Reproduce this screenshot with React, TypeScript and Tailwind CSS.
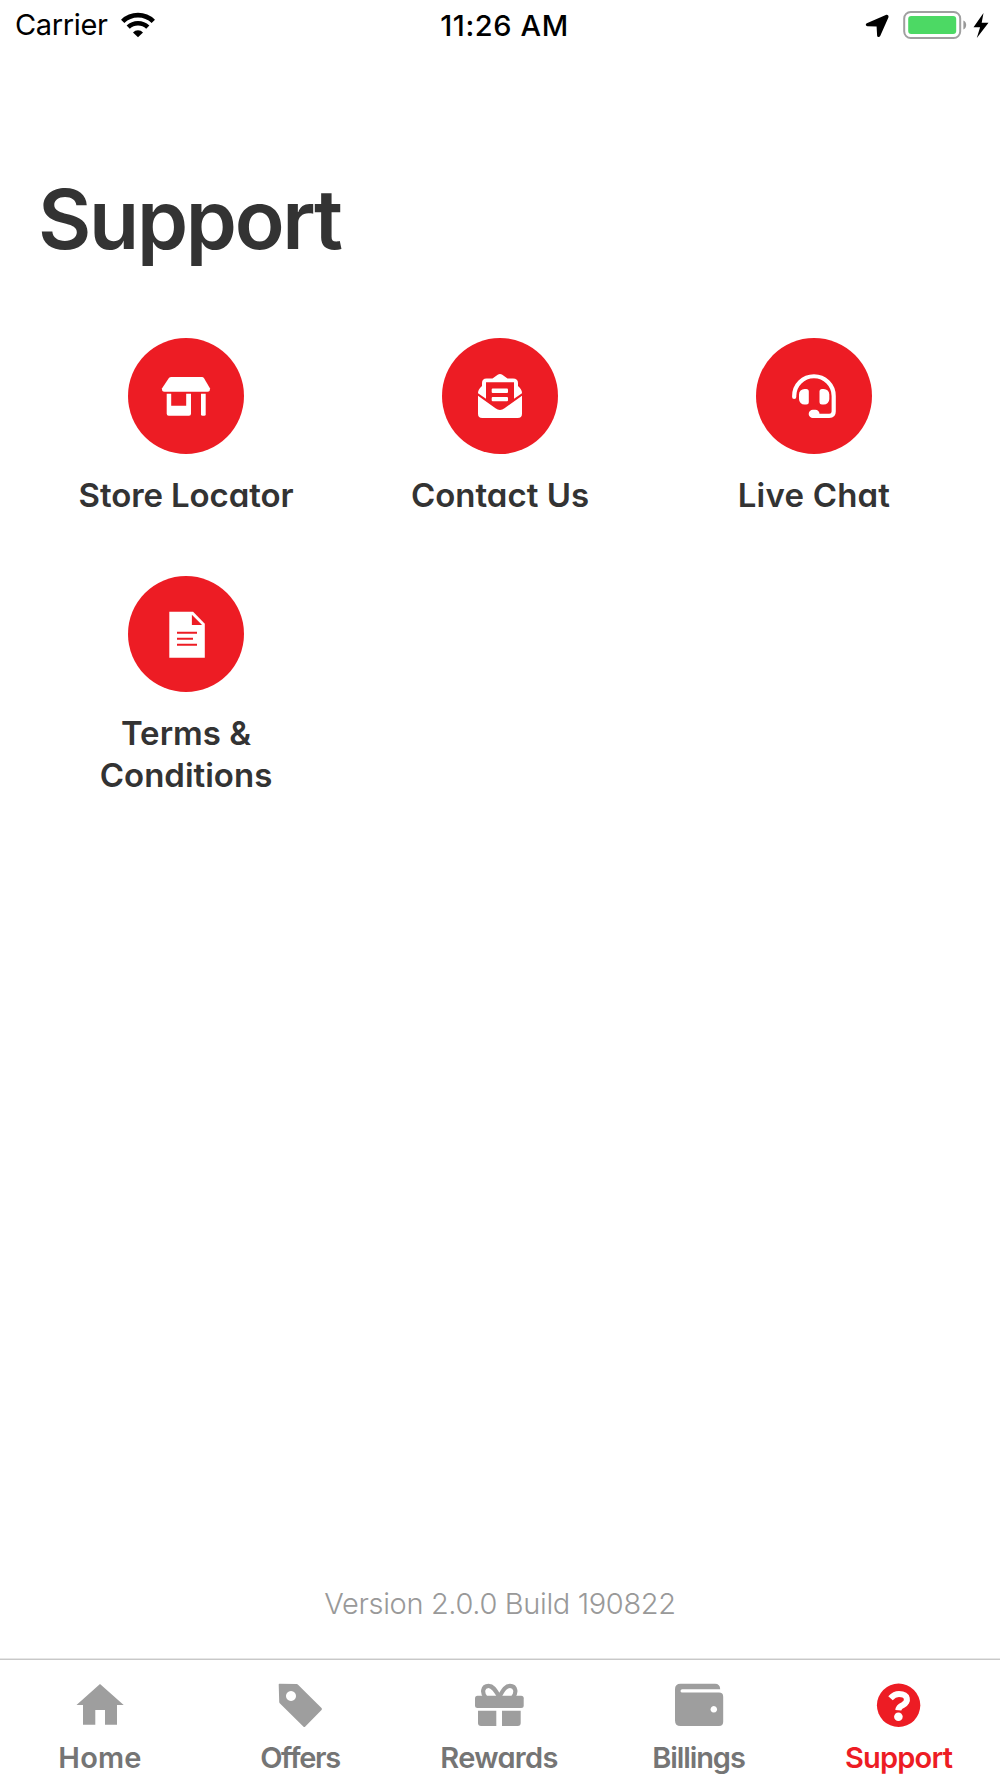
import * as React from "react";

function StatusBar() {
  return (
    <div className="grid h-[50px] grid-cols-3 items-center pl-[15px] pr-[11px] text-[29px] text-black">
      <div className="flex items-center gap-[13px]">
        <span className="tracking-[-0.35px]">Carrier</span>
        <svg className="h-[26px] w-[34px]" viewBox="0 0 34 26" fill="none" stroke="#000">
          <path d="M1.7 9.4a22 22 0 0 1 30.6 0" strokeWidth="4.8" />
          <path d="M7.2 15.2a14.2 14.2 0 0 1 19.6 0" strokeWidth="4.6" />
          <path d="M17 25.3l-5-4.9a7 7 0 0 1 10 0z" fill="#000" stroke="none" />
        </svg>
      </div>
      <div className="pt-px pl-[5px] text-center font-medium tracking-[0.6px]">11:26 AM</div>
      <div className="flex items-center justify-end">
        <svg className="h-[30px] w-[124px]" viewBox="865 9 124 30">
          <path
            d="M885.8 14L866.800 22.200c-1.600.9-1.200 2.900.6 3l9.200.4.500 8.800c.2 2.100 2.300 2.200 3.100.6L888.400 16.600c.7-1.700-.8-3.300-2.600-2.600z"
            fill="#000"
          />
          <rect x="904.200" y="11" width="56" height="26" rx="6.500" fill="none" stroke="#a0a0a0" strokeWidth="2" />
          <rect x="908.200" y="15" width="48" height="18" rx="3" fill="#4cd964" />
          <path d="M963.400 19.500c3.700 1.600 3.700 7.400 0 9z" fill="#999" />
          <path d="M983.500 12l-10 14.200h6.600L976.800 37l11.700-15.200h-6.800z" fill="#000" />
        </svg>
      </div>
    </div>
  );
}

function StoreIcon() {
  return (
    <svg className="size-full" viewBox="0 0 116 116" fill="#fff">
      <path d="M43.500 39h30.500q1.200 0 1.900 1l6 10.200q.4 3.500-2.400 3.500H36.500q-3 0-2.400-3.500l6.800-10.200q.8-1 2.600-1z" />
      <path d="M38.700 55.700h4.500v12h15v-12H63v20q0 2-2 2H40.700q-2 0-2-2z" />
      <path d="M73 55.700h4.700v20.500q0 1.500-1.500 1.500H74.500q-1.500 0-1.500-1.500z" />
    </svg>
  );
}

function MailIcon() {
  return (
    <svg className="size-full" viewBox="0 0 116 116" fill="#fff">
      <path d="M44 60.800l-8-5.600q-.2-3.500 4-7.200V45q0-4.500 4.500-4.500h6l5.200-3.700q2.300-1.600 4.600 0l5.200 3.700H71q5 0 5 4.500v3q4.200 3.700 4 7.200l-8 5.600V44.300H44z" />
      <path d="M36 57.700l17.500 12.600q4.500 3.400 9 0L80 57.700v18q0 4.300-4.300 4.300H40.300q-4.300 0-4.300-4.300z" />
      <rect x="49.700" y="50.600" width="16.300" height="4.300" rx="1" />
      <rect x="49.700" y="58.900" width="16.300" height="4.300" rx="1" />
    </svg>
  );
}

function HeadsetIcon() {
  return (
    <svg className="size-full" viewBox="0 0 116 116" fill="#fff">
      <path
        d="M38.200 59V58a19.700 19.700 0 0 1 39.500 0v15.500q0 4.400-4.400 4.400H58"
        fill="none"
        stroke="#fff"
        strokeWidth="4.200"
        strokeLinecap="round"
      />
      <rect x="52.700" y="71.700" width="10.800" height="8.400" rx="4.200" />
      <path d="M48.500 51h1.800a2.500 2.500 0 0 1 2.500 2.500v10.500a2.500 2.500 0 0 1-2.500 2.500h-1.800a5.500 5.500 0 0 1-5.500-5.500v-4.500a5.500 5.500 0 0 1 5.500-5.500z" />
      <path d="M67.800 51H66a2.500 2.500 0 0 0-2.500 2.500v10.500a2.500 2.500 0 0 0 2.500 2.500h1.800a5.500 5.500 0 0 0 5.500-5.500v-4.500a5.500 5.500 0 0 0-5.500-5.500z" />
    </svg>
  );
}

function DocumentIcon() {
  return (
    <svg className="size-full" viewBox="0 0 116 116">
      <path d="M41.300 35.700h23.800l11.700 12v34H41.300z" fill="#fff" />
      <path d="M63.900 38.700v10.300h10.200z" fill="#ed1c24" />
      <path d="M49 56.700H69M49 62.700H65M49 68.700H69" stroke="#ed1c24" strokeWidth="2" />
    </svg>
  );
}

function HomeIcon() {
  return (
    <svg className="size-full" viewBox="0 0 50 50" fill="currentColor">
      <path d="M25 4l23.700 21H42v19.800H30V30h-9.700v14.800H8V25H1.500z" />
    </svg>
  );
}

function TagIcon() {
  return (
    <svg className="size-full" viewBox="0 0 50 50" fill="currentColor">
      <path
        fillRule="evenodd"
        d="M4.300 3.700l17.200.4q1 0 1.800.8L46.500 28q1 1 0 2L30.300 46.500q-1 1-2 0L5 23.600q-.8-.8-.8-1.800L3.700 4.300zM16 11a5 5 0 1 0 .01 0z"
      />
    </svg>
  );
}

function GiftIcon() {
  return (
    <svg className="size-full" viewBox="0 0 50 50" fill="currentColor">
      <path
        d="M24.300 17C20 9 17.500 5.800 13.500 5.800C7 5.800 7 13.500 10.500 17M24.300 17C28.600 9 31 5.800 35 5.800C41.500 5.800 41.500 13.500 38 17"
        fill="none"
        stroke="currentColor"
        strokeWidth="4.200"
      />
      <rect x="0" y="15.800" width="48.700" height="12.200" rx="2.500" />
      <path d="M3 30.800h18.300V46H6q-3 0-3-3z" />
      <path d="M27 30.800h18.700V43q0 3-3 3H27z" />
    </svg>
  );
}

function WalletIcon() {
  return (
    <svg className="size-full" viewBox="0 0 50 50" fill="currentColor">
      <path
        fillRule="evenodd"
        d="M5.500 3.700H40q5 0 5.200 5.500H7.200a1.600 1.600 0 0 0 0 3.400H44q4.200 0 4.200 4.200v25q0 4.200-4.200 4.200H5.500Q0 46 0 40.500V9.200Q0 3.700 5.500 3.700zM38.800 26a3.300 3.300 0 1 0 .01 0z"
      />
    </svg>
  );
}

function HelpIcon() {
  return (
    <svg className="size-full" viewBox="0 0 50 50">
      <circle cx="23.600" cy="25.300" r="21.700" fill="currentColor" />
      <path
        d="M15.500 18.300C18.500 15 21 14 24 14C33.500 14 34 22 28 25Q23.500 27 23.300 30.300"
        fill="none"
        stroke="#fff"
        strokeWidth="6"
      />
      <circle cx="23.400" cy="36.800" r="4.300" fill="#fff" />
    </svg>
  );
}

const actions = [
  { lines: ["Store Locator"], icon: <StoreIcon />, text: "tracking-[-0.1px]" },
  { lines: ["Contact Us"], icon: <MailIcon />, text: "tracking-normal" },
  { lines: ["Live Chat"], icon: <HeadsetIcon />, text: "tracking-[0.2px]" },
  { lines: ["Terms &", "Conditions"], icon: <DocumentIcon />, text: "tracking-normal" },
];

const tabs = [
  { label: "Home", icon: <HomeIcon />, text: "tracking-[0.2px]" },
  { label: "Offers", icon: <TagIcon />, text: "tracking-[-1.3px]" },
  { label: "Rewards", icon: <GiftIcon />, text: "mr-[2px] tracking-[-0.7px]" },
  { label: "Billings", icon: <WalletIcon />, text: "mr-[3px] tracking-[-1.1px]" },
  { label: "Support", icon: <HelpIcon />, text: "mr-[3px] tracking-[-0.8px]", active: true },
];

export default function App() {
  return (
    <div className="flex h-[1778px] w-[1000px] flex-col overflow-hidden bg-white font-['Inter',sans-serif]">
      <StatusBar />
      <main className="flex flex-1 flex-col [font-feature-settings:'cv11']">
        <h1 className="mt-[120px] pl-[38px] text-[82px] leading-[100px] font-semibold tracking-[-2.3px] text-[#333]">
          Support
        </h1>
        <div className="mt-[68px] grid grid-cols-3 gap-y-[60px] px-[29px]">
          {actions.map((action) => (
            <a key={action.lines[0]} href="#" className="flex flex-col items-center">
              <div className="size-[116px] rounded-full bg-[#ed1c24]">{action.icon}</div>
              <div
                className={`mt-[20px] text-center text-[33px] leading-[42px] font-semibold text-[#333] ${action.text}`}
              >
                {action.lines.map((line) => (
                  <div key={line}>{line}</div>
                ))}
              </div>
            </a>
          ))}
        </div>
        <p className="mt-auto mb-[34px] text-center text-[29px] leading-[40px] font-light tracking-[-0.35px] text-[#999]">
          Version 2.0.0 Build 190822
        </p>
      </main>
      <nav className="h-[120px] border-t border-[#e6e6e6] [font-feature-settings:'cv11']">
        <div className="grid grid-cols-5 border-t border-[#c8c8c8]">
          {tabs.map((tab) => (
            <a
              key={tab.label}
              href="#"
              className={`flex flex-col items-center pt-5 ${tab.active ? "text-[#ed1c24]" : "text-[#9e9e9e]"}`}
            >
              <div className="size-[50px]">{tab.icon}</div>
              <span
                className={`mt-[8px] text-[29px] leading-[40px] font-semibold ${tab.text} ${
                  tab.active ? "" : "text-[#757575]"
                }`}
              >
                {tab.label}
              </span>
            </a>
          ))}
        </div>
      </nav>
    </div>
  );
}
